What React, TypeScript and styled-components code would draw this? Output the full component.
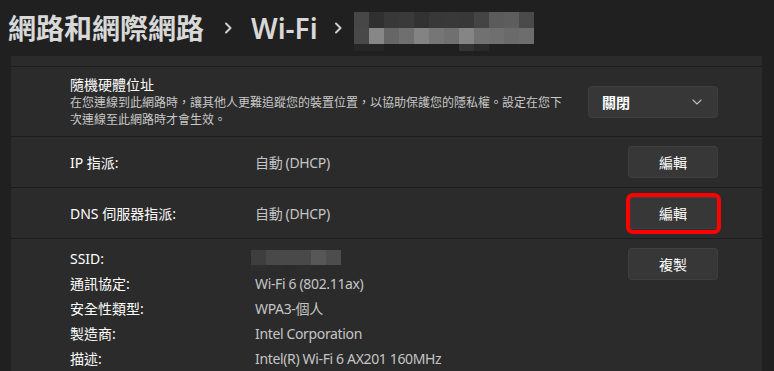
import React from "react";
import styled, { createGlobalStyle } from "styled-components";

const GlobalStyle = createGlobalStyle`
  html, body { margin: 0; padding: 0; background: #202020; }
  body {
    font-family: "Noto Sans", "Noto Sans CJK TC", sans-serif;
    color: #ffffff;
    -webkit-font-smoothing: antialiased;
  }
`;

const Page = styled.div`
  width: 774px;
  height: 371px;
  overflow: hidden;
  background: #202020;
`;

const Header = styled.header`
  height: 56px;
  display: flex;
  align-items: center;
  padding-left: 8px;
  box-sizing: border-box;
`;

const Crumb = styled.span`
  font-family: "Noto Sans", "Noto Sans CJK TC", sans-serif;
  font-size: 28px;
  font-weight: 600;
  color: #d8d8d8;
  line-height: 1;
  letter-spacing: 0;
`;

const Sep = styled.span<{ $left: number; $right: number }>`
  display: inline-flex;
  margin: 0 ${(p) => p.$right}px 0 ${(p) => p.$left}px;
  color: #cfcfcf;
`;

const Card = styled.section`
  margin-left: 11px;
  width: 751px;
  display: flex;
  flex-direction: column;
  gap: 1px;
  background: #1c1c1c;
`;

const Stub = styled.div`
  height: 10px;
  background: #2b2b2b;
`;

const Row = styled.div<{ $h?: number }>`
  display: grid;
  grid-template-columns: 185px 1fr auto;
  align-items: center;
  height: ${(p) => (p.$h ? `${p.$h}px` : "auto")};
  padding: 0 44px 0 59px;
  background: #2b2b2b;
  box-sizing: border-box;
`;

const InfoRow = styled.div`
  display: grid;
  grid-template-columns: 1fr auto;
  align-items: start;
  padding: 7px 44px 20px 59px;
  background: #2b2b2b;
`;

const RandomRow = styled.div`
  display: flex;
  align-items: center;
  justify-content: space-between;
  height: 69px;
  padding: 1px 44px 0 59px;
  background: #2b2b2b;
  box-sizing: border-box;
`;

const TextBlock = styled.div`
  display: flex;
  flex-direction: column;
`;

const Title = styled.div`
  font-size: 14px;
  line-height: 18px;
  color: #ffffff;
`;

const Desc = styled.div`
  font-size: 12px;
  line-height: 17px;
  color: #c8c8c8;
`;

const Label = styled.div`
  font-size: 14px;
  line-height: 25px;
  height: 25px;
  color: #ffffff;
`;

const Value = styled.div`
  font-size: 14px;
  line-height: 25px;
  height: 25px;
  color: #c5c5c5;
  white-space: nowrap;
  letter-spacing: -0.35px;
`;

const SsidCell = styled.div`
  height: 25px;
  box-sizing: border-box;
  padding-top: 4px;
  margin-left: -4px;
  display: flex;
  align-items: flex-start;
`;

const InfoGrid = styled.div`
  display: grid;
  grid-template-columns: 185px 1fr;
`;

const Button = styled.button<{ $highlight?: boolean }>`
  position: relative;
  width: 90px;
  height: 32px;
  background: #373737;
  border: 1px solid #3e3e3e;
  border-top-color: #404040;
  border-radius: 4px;
  color: #ffffff;
  font-family: "Noto Sans", "Noto Sans CJK TC", sans-serif;
  font-size: 14px;
  padding: 0;
  cursor: pointer;
  &::after {
    content: "";
    display: ${(p) => (p.$highlight ? "block" : "none")};
    position: absolute;
    top: -5px;
    bottom: -6px;
    left: -3px;
    right: -4px;
    border: 4px solid #ff0000;
    border-radius: 7px;
  }
`;

const CopyButton = styled(Button)`
  margin-top: 2px;
`;

const Select = styled.div`
  width: 130px;
  height: 32px;
  box-sizing: border-box;
  display: flex;
  align-items: center;
  justify-content: space-between;
  padding: 0 15px 0 13px;
  background: #373737;
  border: 1px solid #3e3e3e;
  border-radius: 4px;
  font-size: 14px;
  font-weight: 600;
  color: #ffffff;
`;

const Chevron = () => (
  <svg width="9" height="12" viewBox="0 0 9 12">
    <path d="M2 1.5 L6.5 6 L2 10.5" fill="none" stroke="currentColor" strokeWidth="2" strokeLinecap="round" strokeLinejoin="round" />
  </svg>
);

const Down = () => (
  <svg width="10" height="6" viewBox="0 0 10 6">
    <path d="M1 1 L5 5 L9 1" fill="none" stroke="#bdbdbd" strokeWidth="1.1" strokeLinecap="round" strokeLinejoin="round" />
  </svg>
);

const titleMosaic: string[][] = [
  ["#474747", "#303030", "#383838", "#3a3a3a", "#323232", "#383838", "#393939", "#383838", "#444444", "#5b5b5b", "#5d5d5d", "#4a4a4a"],
  ["#484848", "#878787", "#666666", "#6f6f6f", "#838383", "#767676", "#707070", "#858585", "#717171", "#6f6f6f", "#6a6a6a", "#6d6d6d"],
  ["#262626", "#262626", "", "", "", "", "", "#333333", "#2a2a2a", "", "", ""],
];

const Mosaic = ({ rows, bw, heights }: { rows: string[][]; bw: number; heights: number[] }) => {
  const width = rows[0].length * bw;
  const height = heights.reduce((a, b) => a + b, 0);
  let y = 0;
  return (
    <svg width={width} height={height} viewBox={`0 0 ${width} ${height}`} style={{ display: "block" }}>
      {rows.map((r, ri) => {
        const top = y;
        y += heights[ri];
        return r.map((c, ci) =>
          c ? <rect key={`${ri}-${ci}`} x={ci * bw} y={top} width={bw} height={heights[ri]} fill={c} /> : null
        );
      })}
    </svg>
  );
};

const TitleBlur = styled.span`
  display: inline-flex;
  margin-top: 6px;
`;

const ssidMosaic: string[][] = [
  ["#3e3e3e", "#494949", "#494949", "#494949", "#575757", "#4d4d4d"],
  ["#2e2e2e", "#2d2d2d", "#2b2b2b", "#2d2d2d", "#2b2b2b", "#2b2b2b"],
];

const info: [string, string][] = [
  ["通訊協定:", "Wi-Fi 6 (802.11ax)"],
  ["安全性類型:", "WPA3-個人"],
  ["製造商:", "Intel Corporation"],
  ["描述:", "Intel(R) Wi-Fi 6 AX201 160MHz"],
];

export default function App() {
  return (
    <Page>
      <GlobalStyle />
      <Header>
        <Crumb>網路和網際網路</Crumb>
        <Sep $left={20} $right={18}><Chevron /></Sep>
        <Crumb>Wi-Fi</Crumb>
        <Sep $left={16} $right={11}><Chevron /></Sep>
        <TitleBlur>
          <Mosaic rows={titleMosaic} bw={15} heights={[16, 16, 7]} />
        </TitleBlur>
      </Header>
      <Card>
        <Stub />
        <RandomRow>
          <TextBlock>
            <Title>隨機硬體位址</Title>
            <Desc>
              在您連線到此網路時，讓其他人更難追蹤您的裝置位置，以協助保護您的隱私權。設定在您下
              <br />
              次連線至此網路時才會生效。
            </Desc>
          </TextBlock>
          <Select>
            <span>關閉</span>
            <Down />
          </Select>
        </RandomRow>
        <Row $h={50}>
          <Label>IP 指派:</Label>
          <Value>自動 (DHCP)</Value>
          <Button>編輯</Button>
        </Row>
        <Row $h={50}>
          <Label>DNS 伺服器指派:</Label>
          <Value>自動 (DHCP)</Value>
          <Button $highlight>編輯</Button>
        </Row>
        <InfoRow>
          <InfoGrid>
            <Label>SSID:</Label>
            <SsidCell>
              <Mosaic rows={ssidMosaic} bw={15} heights={[15, 6]} />
            </SsidCell>
            {info.map(([k, v]) => (
              <React.Fragment key={k}>
                <Label>{k}</Label>
                <Value>{v}</Value>
              </React.Fragment>
            ))}
          </InfoGrid>
          <CopyButton>複製</CopyButton>
        </InfoRow>
      </Card>
    </Page>
  );
}
